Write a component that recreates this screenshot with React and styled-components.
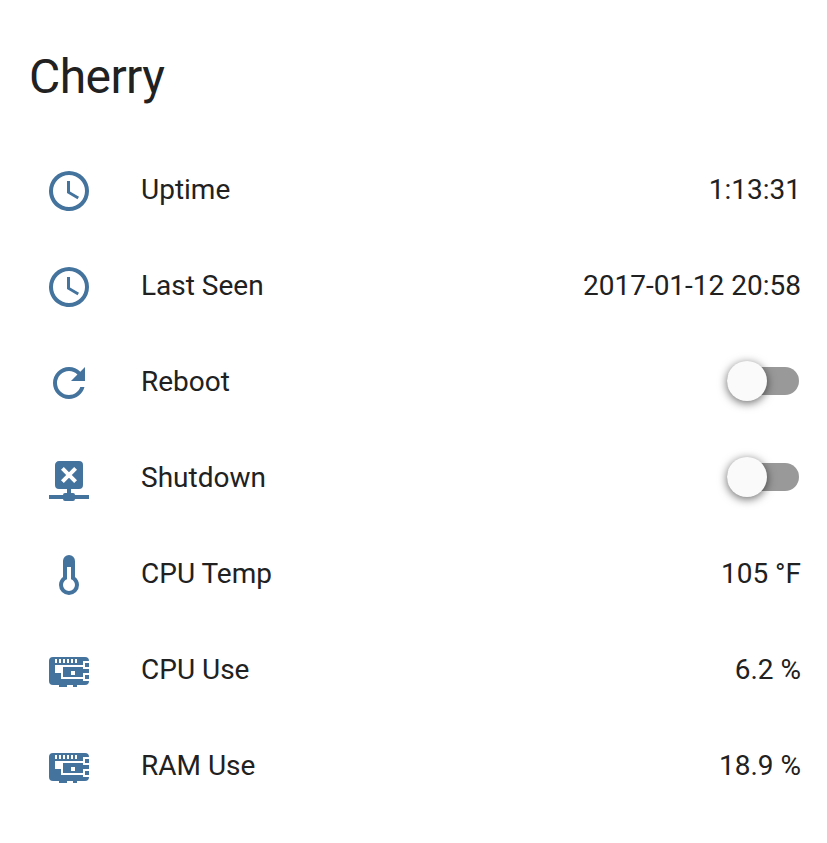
import React from 'react';
import styled, { createGlobalStyle } from 'styled-components';

const GlobalStyle = createGlobalStyle`
  body { margin: 0; background: #fff; }
`;

const Card = styled.main`
  box-sizing: border-box;
  width: 827px;
  height: 843px;
  padding: 45px 26px 0 29px;
  background: #fff;
  color: #212121;
  font-family: Roboto, sans-serif;
  -webkit-font-smoothing: antialiased;
`;

const Title = styled.h1`
  margin: 0 0 33px;
  font-size: 48px;
  font-weight: 400;
  line-height: 64px;
  letter-spacing: -0.576px;
`;

const Row = styled.div`
  display: flex;
  align-items: center;
  height: 96px;
  padding-left: 16px;
  font-size: 28px;
  line-height: 40px;
`;

const Icon = styled.svg`
  flex: none;
  width: 48px;
  height: 48px;
  margin: 2px 48px 0 0;
  fill: #44739e;
`;

const Label = styled.span`
  flex: 1;
`;

const Value = styled.span`
  white-space: nowrap;
`;

const Toggle = styled.button`
  display: flex;
  align-items: center;
  width: 72px;
  height: 28px;
  margin: 0 2px 2px 0;
  padding: 0;
  border: 0;
  border-radius: 14px;
  background: #999;
`;

const Knob = styled.span`
  flex: none;
  width: 40px;
  height: 40px;
  border-radius: 50%;
  background: #fafafa;
  box-shadow: 0 2px 10px rgba(0, 0, 0, 0.6);
`;

const icons = {
  clock: 'M12,20A8,8 0 0,0 20,12A8,8 0 0,0 12,4A8,8 0 0,0 4,12A8,8 0 0,0 12,20M12,2A10,10 0 0,1 22,12A10,10 0 0,1 12,22C6.47,22 2,17.5 2,12A10,10 0 0,1 12,2M12.5,7V12.25L17,14.92L16.25,16.15L11,13V7H12.5Z',
  refresh: 'M17.65,6.35C16.2,4.9 14.21,4 12,4A8,8 0 0,0 4,12A8,8 0 0,0 12,20C15.73,20 18.84,17.45 19.73,14H17.65C16.83,16.33 14.61,18 12,18A6,6 0 0,1 6,12A6,6 0 0,1 12,6C13.66,6 15.14,6.69 16.22,7.78L13,11H20V4L17.65,6.35Z',
  network: 'M14.59,6L12,8.59L9.41,6L8,7.41L10.59,10L8,12.59L9.41,14L12,11.41L14.59,14L16,12.59L13.41,10L16,7.41L14.59,6M17,3A2,2 0 0,1 19,5V15A2,2 0 0,1 17,17H13V19H14A1,1 0 0,1 15,20H22V22H15A1,1 0 0,1 14,23H10A1,1 0 0,1 9,22H2V20H9A1,1 0 0,1 10,19H11V17H7A2,2 0 0,1 5,15V5C5,3.89 5.9,3 7,3H17Z',
  thermometer: 'M17,17A5,5 0 0,1 12,22A5,5 0 0,1 7,17C7,15.36 7.79,13.91 9,13V5A3,3 0 0,1 12,2A3,3 0 0,1 15,5V13C16.21,13.91 17,15.36 17,17M11,8V14.17C9.83,14.58 9,15.69 9,17A3,3 0 0,0 12,20A3,3 0 0,0 15,17C15,15.69 14.17,14.58 13,14.17V8H11Z',
  board: 'M4,5H20A2,2 0 0,1 22,7H19V9H5V13H8V16H19V17H22A2,2 0 0,1 20,19H16V20H14V19H11V20H7V19H4A2,2 0 0,1 2,17V7A2,2 0 0,1 4,5M5,6V8H6V6H5M7,6V8H8V6H7M9,6V8H10V6H9M11,6V8H12V6H11M13,6V8H14V6H13M15,6V8H16V6H15M9,10H19V11H22V13H19V15H9V10M13,12V14H15V12H13M20,8H22V10H20V8M20,14H22V16H20V14Z',
};

const rows = [
  { icon: 'clock', label: 'Uptime', value: '1:13:31' },
  { icon: 'clock', label: 'Last Seen', value: '2017-01-12 20:58' },
  { icon: 'refresh', label: 'Reboot' },
  { icon: 'network', label: 'Shutdown' },
  { icon: 'thermometer', label: 'CPU Temp', value: '105 °F' },
  { icon: 'board', label: 'CPU Use', value: '6.2 %' },
  { icon: 'board', label: 'RAM Use', value: '18.9 %' },
];

export default function App() {
  return (
    <Card>
      <GlobalStyle />
      <Title>Cherry</Title>
      {rows.map(({ icon, label, value }) => (
        <Row key={label}>
          <Icon viewBox="0 0 24 24" aria-hidden="true">
            <path fillRule="evenodd" d={icons[icon]} />
          </Icon>
          <Label>{label}</Label>
          {value ? (
            <Value>{value}</Value>
          ) : (
            <Toggle type="button" role="switch" aria-checked="false" aria-label={label}>
              <Knob />
            </Toggle>
          )}
        </Row>
      ))}
    </Card>
  );
}
